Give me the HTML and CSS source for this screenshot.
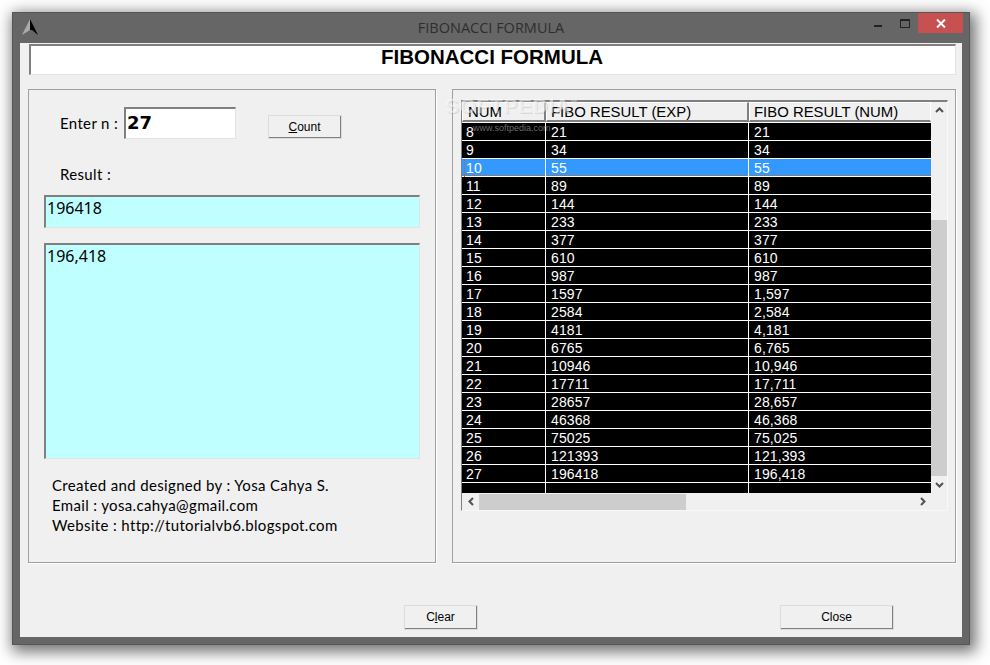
FILE: index.html
```html
<!DOCTYPE html>
<html lang="en">
<head>
<meta charset="utf-8">
<title>FIBONACCI FORMULA</title>
<link rel="stylesheet" href="styles.css">
</head>
<body>
<div class="window">
  <div class="titlebar">
    <svg class="app-icon" width="17" height="17" viewBox="0 0 17 17"><path d="M8 0 L0 16 L8 11 Z" fill="#aaa"/><path d="M8 0 L16 16 L10 11 L8 11 Z" fill="#000"/></svg>
    <div class="title-text">FIBONACCI FORMULA</div>
    <div class="controls">
      <svg class="ctl-min" width="8" height="3" viewBox="0 0 8 3"><rect width="8" height="2" y="1" fill="#222"/></svg>
      <svg class="ctl-max" width="10" height="9" viewBox="0 0 10 9"><rect x=".5" y=".5" width="9" height="8" fill="none" stroke="#222"/><rect x="0" y="0" width="10" height="2" fill="#222"/></svg>
      <div class="ctl-close"><svg width="10" height="9" viewBox="0 0 10 9"><path d="M1 .5 L9 8.5 M9 .5 L1 8.5" stroke="#fff" stroke-width="2"/></svg></div>
    </div>
  </div>
  <div class="client">
    <div class="banner">FIBONACCI FORMULA</div>
    <div class="panels">
      <div class="panel left">
        <div class="enter-row">
          <span class="label">Enter n :</span>
          <div class="sunken input-n">27</div>
          <div class="btn btn-count"><span><u>C</u>ount</span></div>
        </div>
        <div class="label result-label">Result :</div>
        <div class="sunken cyan result-one">196418</div>
        <div class="sunken cyan result-two">196,418</div>
        <div class="credits">
          <div>Created and designed by : Yosa Cahya S.</div>
          <div>Email : yosa.cahya@gmail.com</div>
          <div>Website : http://tutorialvb6.blogspot.com</div>
        </div>
      </div>
      <div class="panel right">
        <div class="grid-box">
          <div class="grid-main">
            <div class="grid-cols">
              <div class="head-row"><div class="hcell">NUM</div><div class="hcell">FIBO RESULT (EXP)</div><div class="hcell">FIBO RESULT (NUM)</div></div>
              <div class="row"><div>8</div><div>21</div><div>21</div></div>
              <div class="row"><div>9</div><div>34</div><div>34</div></div>
              <div class="row sel"><div>10</div><div>55</div><div>55</div></div>
              <div class="row"><div>11</div><div>89</div><div>89</div></div>
              <div class="row"><div>12</div><div>144</div><div>144</div></div>
              <div class="row"><div>13</div><div>233</div><div>233</div></div>
              <div class="row"><div>14</div><div>377</div><div>377</div></div>
              <div class="row"><div>15</div><div>610</div><div>610</div></div>
              <div class="row"><div>16</div><div>987</div><div>987</div></div>
              <div class="row"><div>17</div><div>1597</div><div>1,597</div></div>
              <div class="row"><div>18</div><div>2584</div><div>2,584</div></div>
              <div class="row"><div>19</div><div>4181</div><div>4,181</div></div>
              <div class="row"><div>20</div><div>6765</div><div>6,765</div></div>
              <div class="row"><div>21</div><div>10946</div><div>10,946</div></div>
              <div class="row"><div>22</div><div>17711</div><div>17,711</div></div>
              <div class="row"><div>23</div><div>28657</div><div>28,657</div></div>
              <div class="row"><div>24</div><div>46368</div><div>46,368</div></div>
              <div class="row"><div>25</div><div>75025</div><div>75,025</div></div>
              <div class="row"><div>26</div><div>121393</div><div>121,393</div></div>
              <div class="row"><div>27</div><div>196418</div><div>196,418</div></div>
              <div class="row empty"><div></div><div></div><div></div></div>
            </div>
            <div class="vscroll">
              <svg width="9" height="6" viewBox="0 0 9 6"><path d="M1 5 L4.5 1.5 L8 5" fill="none" stroke="#505050" stroke-width="2"/></svg>
              <div class="vthumb"></div>
              <svg class="vdown" width="9" height="6" viewBox="0 0 9 6"><path d="M1 1 L4.5 4.5 L8 1" fill="none" stroke="#505050" stroke-width="2"/></svg>
            </div>
          </div>
          <div class="hscroll">
            <svg width="6" height="9" viewBox="0 0 6 9"><path d="M5 1 L1.5 4.5 L5 8" fill="none" stroke="#505050" stroke-width="2"/></svg>
            <div class="htrack"><div class="hthumb"></div></div>
            <svg width="6" height="9" viewBox="0 0 6 9"><path d="M1 1 L4.5 4.5 L1 8" fill="none" stroke="#505050" stroke-width="2"/></svg>
          </div>
        </div>
        <div class="wm-main">SOFTPEDIA<sup>™</sup></div>
        <div class="wm-url">www.softpedia.com</div>
      </div>
    </div>
    <div class="footer">
      <div class="btn btn-clear"><span>C<u>l</u>ear</span></div>
      <div class="btn btn-close"><span>Close</span></div>
    </div>
  </div>
</div>
</body>
</html>
```
FILE: styles.css
```css
* { box-sizing: border-box; }
html, body { margin: 0; height: 100%; }
body { background: #fff; width: 990px; height: 665px; overflow: hidden; padding: 12px 0 0 12px; }
.window {
  width: 958px; height: 633px; background: #666; border: 1px solid #555;
  padding: 0 7px 7px; display: flex; flex-direction: column;
  box-shadow: 3px 4px 14px 3px rgba(0,0,0,.55);
}
.titlebar { height: 30px; flex: none; display: flex; position: relative; }
.app-icon { position: absolute; left: 2px; top: 6px; }
.title-text { flex: 1; text-align: center; font: 14.5px/30px "Open Sans", sans-serif; color: #2e2e2e; }
.controls { position: absolute; right: -1px; top: 0; display: flex; align-items: flex-start; }
.ctl-min { margin: 11px 18px 0 0; }
.ctl-max { margin: 6px 8px 0 0; }
.ctl-close { width: 45px; height: 20px; background: #c75050; display: flex; align-items: center; justify-content: center; }
.client { flex: 1; background: #f0f0f0; display: flex; flex-direction: column; padding: 1px 6px 0 8px; }
.banner {
  height: 31px; margin-left: 1px; background: #fff; padding-right: 2px;
  border: 1px solid #e3e3e3; border-top: 2px solid #808080; border-left: 2px solid #808080;
  text-align: center; font: bold 20.5px/22px "Liberation Sans", sans-serif; color: #000;
}
.panels { display: flex; gap: 16px; margin-top: 14px; height: 474px; flex: none; }
.panel { border: 1px solid #a0a0a0; box-shadow: 1px 1px 0 #fff; position: relative; }
.left { width: 408px; padding: 17px 15px 0; }
.right { width: 504px; padding: 10px 8px 0; }
.label, .credits { font: 15px/20px "Lato", sans-serif; color: #000; letter-spacing: .35px; }
.enter-row { display: flex; align-items: flex-start; padding-left: 16px; }
.enter-row .label { width: 64px; margin-top: 6px; white-space: nowrap; }
.sunken { border: 1px solid #e3e3e3; border-top: 2px solid #808080; border-left: 2px solid #808080; }
.input-n { width: 112px; height: 32px; background: #fff; font: bold 18px/28px "DejaVu Sans", sans-serif; padding-left: 1px; }
.btn {
  background: #f0f0f0; border: 1px solid #fff; border-right: 2px solid #808080; border-bottom: 2px solid #808080;
  display: flex; align-items: center; justify-content: center;
  font: 12px "Liberation Sans", sans-serif; color: #000; outline: 1px solid #dcdcdc; outline-offset: -1px;
}
.btn-count { width: 74px; height: 24px; margin: 8px 0 0 32px; }
.result-label { margin: 25px 0 0 16px; }
.cyan { background: #bfffff; font: 16px/22px "Noto Sans", sans-serif; color: #000; padding-left: 1px; }
.result-one { height: 33px; margin-top: 11px; width: 376px; }
.result-two { height: 216px; margin-top: 15px; width: 376px; }
.credits { margin: 16px 0 0 8px; }
.grid-box {
  width: 487px; height: 411px; background: #f0f0f0; display: flex; flex-direction: column;
  border: 1px solid #f8f8f8; border-top: 2px solid #808080; border-left: 1px solid #808080;
}
.grid-main { display: flex; height: 391px; flex: none; }
.grid-cols { width: 469px; overflow: hidden; background: #000; }
.head-row { display: grid; grid-template-columns: 84px 203px 182px; height: 21px; background: #f0f0f0; border-bottom: 1px solid #fff; }
.hcell {
  font: 14.9px/19px "Liberation Sans", sans-serif; color: #000; padding-left: 4px;
  border: 1px solid #fff; border-right: 2px solid #808080; border-bottom: 2px solid #808080; white-space: nowrap; overflow: hidden;
}
.hcell:first-child { padding-left: 5px; }
.hcell:last-child { border-right: 1px solid #fff; }
.row { display: grid; grid-template-columns: 84px 203px 182px; height: 18px; background: #000; color: #fff; border-bottom: 1px solid #fff; }
.row > div { font: 14px/18px "Liberation Sans", sans-serif; letter-spacing: .1px; padding-left: 5px; border-right: 1px solid #fff; }
.row > div:first-child { padding-left: 4px; }
.row > div:last-child { border-right: 0; }
.sel { background: repeating-linear-gradient(90deg, #c66300 0 1px, #3399ff 1px 2px) bottom / 100% 1px no-repeat, #3399ff; }
.sel > div:first-child { margin-left: 2px; border-left: 1px dotted #c66300; padding-left: 1px; }
.empty { height: 10px; border-bottom: 0; }
.vscroll { width: 16px; flex: none; display: flex; flex-direction: column; align-items: center; padding-top: 5px; }
.vthumb { flex: none; width: 16px; height: 256px; background: #cdcdcd; margin-top: 107px; }
.vdown { margin-top: 6px; }
.hscroll { display: flex; align-items: center; height: 17px; padding-left: 6px; padding-right: 21px; }
.htrack { flex: 1; height: 16px; padding-left: 5px; }
.hthumb { width: 207px; height: 16px; background: #cdcdcd; }
.wm-main { position: absolute; left: -8px; top: 4px; font: bold 21px "Liberation Sans", sans-serif; letter-spacing: .6px; color: rgba(255,255,255,.5); text-shadow: 1px 1px 0 rgba(120,120,120,.2); pointer-events: none; white-space: nowrap; }
.wm-main sup { font-size: 7px; }
.wm-url { position: absolute; left: 20px; top: 33px; font: 9px "Liberation Sans", sans-serif; color: rgba(130,130,130,.85); white-space: nowrap; }
.footer { display: flex; padding: 42px 0 0 376px; gap: 302px; }
.btn-clear { width: 74px; height: 25px; }
.btn-close { width: 114px; height: 25px; }
```
